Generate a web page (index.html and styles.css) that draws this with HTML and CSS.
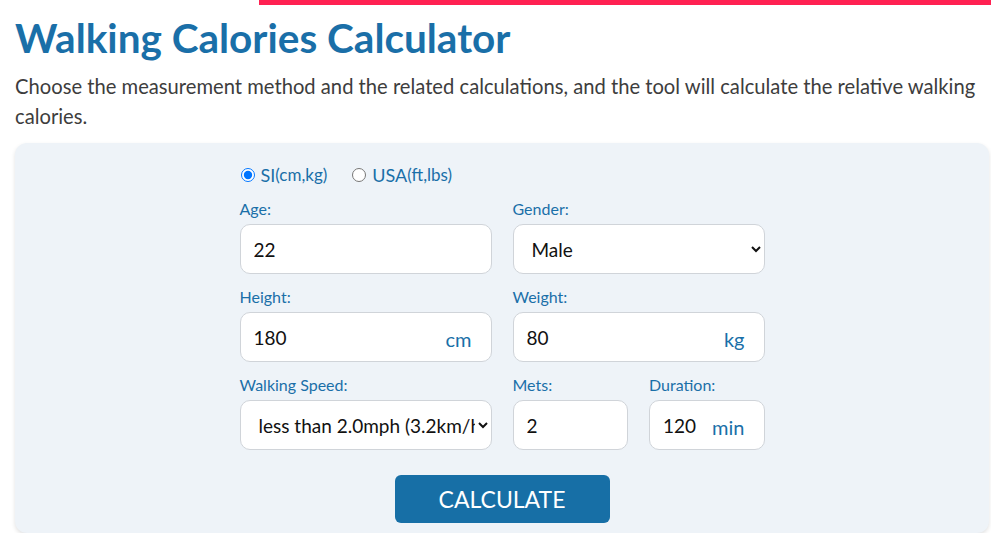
FILE: index.html
```html
<!DOCTYPE html>
<html lang="en">
<head>
    <meta charset="UTF-8">
    <meta name="viewport" content="width=device-width, initial-scale=1.0">
    <title>Walking Calories Calculator</title>
    <link rel="stylesheet" href="styles.css">
</head>
<body>
    <div class="topbar"></div>
    <div class="page">
        <h1>Walking Calories Calculator</h1>
        <p class="intro">Choose the measurement method and the related calculations, and the tool will calculate the relative walking calories.</p>

        <div class="card">
            <form class="calc">
                <div class="units">
                    <label class="radio"><input type="radio" name="unit" checked>SI<span>(cm,kg)</span></label>
                    <label class="radio"><input type="radio" name="unit">USA<span>(ft,lbs)</span></label>
                </div>

                <div class="row">
                    <div class="field">
                        <label>Age:</label>
                        <div class="box"><input type="text" value="22"></div>
                    </div>
                    <div class="field">
                        <label>Gender:</label>
                        <div class="box">
                            <select>
                                <option>Male</option>
                                <option>Female</option>
                            </select>
                        </div>
                    </div>
                </div>

                <div class="row">
                    <div class="field">
                        <label>Height:</label>
                        <div class="box"><input type="text" value="180"><span class="unit">cm</span></div>
                    </div>
                    <div class="field">
                        <label>Weight:</label>
                        <div class="box"><input type="text" value="80"><span class="unit">kg</span></div>
                    </div>
                </div>

                <div class="row">
                    <div class="field">
                        <label>Walking Speed:</label>
                        <div class="box">
                            <select>
                                <option>less than 2.0mph (3.2km/h)</option>
                                <option>2.5mph (4.0km/h)</option>
                            </select>
                        </div>
                    </div>
                    <div class="row small">
                        <div class="field">
                            <label>Mets:</label>
                            <div class="box"><input type="text" value="2"></div>
                        </div>
                        <div class="field">
                            <label>Duration:</label>
                            <div class="box"><input type="text" value="120"><span class="unit">min</span></div>
                        </div>
                    </div>
                </div>

                <div class="actions">
                    <button type="submit">CALCULATE</button>
                </div>
            </form>
        </div>
    </div>
</body>
</html>
```

FILE: styles.css
```css
*{
    margin: 0;
    padding: 0;
    box-sizing: border-box;
    font-family: "Lato", "Liberation Sans", sans-serif;
}

body{
    background: white;
    color: #3b3b3b;
}

.topbar{
    height: 5px;
    margin-left: 259px;
    background-color: #ff2152;
}

.page{
    padding: 0 2px 0 15px;
}

h1{
    color: #1a6fa8;
    font-size: 40.5px;
    font-weight: 700;
    line-height: 48px;
    margin-top: 9px;
}

.intro{
    font-size: 20.2px;
    line-height: 30px;
    color: #3d3d3d;
    margin-top: 9px;
}

.card{
    margin-top: 12px;
    background-color: #eef3f8;
    border-radius: 12px;
    box-shadow: 0 2px 4px rgba(0, 0, 0, 0.12);
    height: 390px;
    padding: 20px 0 0;
}

.calc{
    width: 525px;
    margin: 0 auto;
}

.units{
    display: flex;
    gap: 25px;
    height: 23px;
    align-items: center;
    padding-left: 1px;
}

.radio{
    display: flex;
    align-items: center;
    color: #1a6fa8;
    font-size: 18px;
}

.radio span{
    font-size: 17px;
}

.radio input{
    width: 14px;
    height: 14px;
    margin: 0 6px 0 0;
}

.row{
    display: flex;
    gap: 21px;
    margin-top: 12px;
}

.row > .field, .row > .small{
    flex: 1;
}

.row.small{
    margin-top: 0;
}

.field label{
    display: block;
    color: #1a6fa8;
    font-size: 16px;
    line-height: 21px;
    margin-bottom: 5px;
}

.box{
    position: relative;
}

.box input, .box select{
    width: 100%;
    height: 50px;
    border: 1px solid #d0d4d9;
    border-radius: 10px;
    background: white;
    font-size: 19px;
    color: #111;
    padding: 0 13px;
    outline: none;
}

.box select{
    padding: 0 0 0 14px;
}

.unit{
    position: absolute;
    right: 20px;
    top: 15px;
    color: #1a6fa8;
    font-size: 20px;
}

.actions{
    display: flex;
    justify-content: center;
    margin-top: 25px;
}

button{
    width: 215px;
    height: 48px;
    background-color: #176fa6;
    color: white;
    border: none;
    border-radius: 6px;
    font-size: 23px;
    cursor: pointer;
}
```
